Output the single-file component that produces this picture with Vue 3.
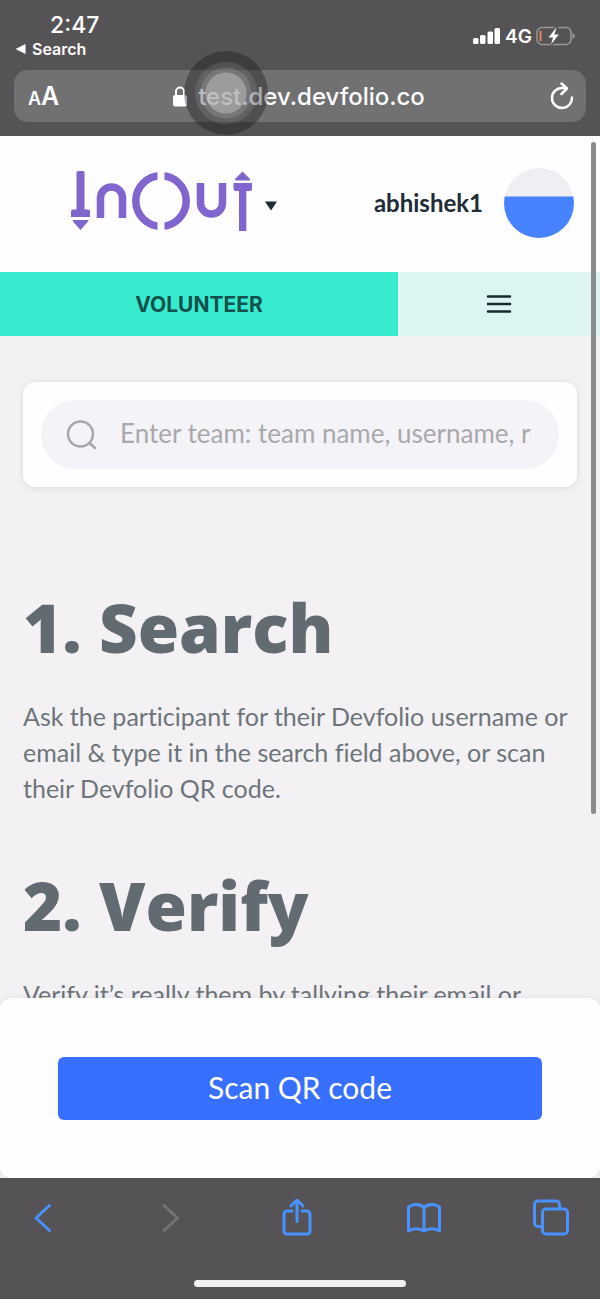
<script setup>
import { ref } from 'vue'

const query = ref('')
const steps = [
  {
    title: '1. Search',
    text: 'Ask the participant for their Devfolio username or email & type it in the search field above, or scan their Devfolio QR code.'
  },
  {
    title: '2. Verify',
    text: 'Verify it’s really them by tallying their email or'
  }
]
</script>

<template>
  <div class="phone">
    <header class="browser-top">
      <div class="status">
        <div class="status-left">
          <span class="time">2:47</span>
          <a class="back-app" href="#">
            <svg width="11" height="12" viewBox="0 0 11 12" aria-hidden="true"><path d="M10.500 1v10L0.500 6z" fill="#fff" /></svg>
            Search
          </a>
        </div>
        <div class="status-right">
          <svg width="28" height="18" viewBox="0 0 28 18" fill="#fff" aria-hidden="true">
            <rect x="0" y="11" width="5.500" height="6" rx="1.500" />
            <rect x="7" y="8" width="5.500" height="9" rx="1.500" />
            <rect x="14.500" y="4.500" width="5.500" height="12.500" rx="1.500" />
            <rect x="21.500" y="1" width="5.500" height="16" rx="1.500" />
          </svg>
          <span class="network">4G</span>
          <svg width="40" height="20" viewBox="0 0 40 20" aria-hidden="true">
            <rect x="1" y="1.500" width="34" height="17" rx="5" fill="none" stroke="#99979a" stroke-width="1.500" />
            <path d="M36.500 7c3 .8 3 5.200 0 6z" fill="#99979a" />
            <rect x="3.500" y="4.500" width="2" height="11" rx="1" fill="#e8845f" />
            <path d="M20 2l-7.500 9.500h4.500L15 18.500l7.800-10h-4.500L20.500 2z" fill="#fff" stroke="#555356" stroke-width="3" paint-order="stroke" />
          </svg>
        </div>
      </div>
      <div class="address">
        <button class="text-size" type="button" aria-label="Page settings"><span class="small-a">A</span>A</button>
        <button class="url" type="button">
          <svg width="14" height="21" viewBox="0 0 14 21" aria-hidden="true">
            <path d="M3 10V5.500a4 4 0 0 1 8 0V10" fill="none" stroke="#fff" stroke-width="2" />
            <rect x="0" y="9" width="14" height="11.500" rx="2" fill="#fff" />
          </svg>
          <span>test.dev.devfolio.co</span>
        </button>
        <button class="reload" type="button" aria-label="Reload">
          <svg width="24" height="28" viewBox="0 0 24 28" fill="none" stroke="#fff" stroke-width="2.500" stroke-linecap="round" stroke-linejoin="round" aria-hidden="true">
            <path d="M22 15.500A10 10 0 1 1 12 6h4.500M11.500 1.500l5.500 5-5.500 5.500" />
          </svg>
        </button>
        <span class="touch"></span>
      </div>
    </header>

    <div class="page">
      <main class="content">
        <div class="site-header">
          <button class="brand" type="button" aria-label="InOut, choose hackathon">
            <svg width="183" height="60" viewBox="0 0 183 60" fill="none" stroke="#8065cf" stroke-width="7.500" aria-hidden="true">
              <path d="M30.500 47V27a11 11 0 0 1 22 0v20" />
              <circle cx="91" cy="30" r="25.200" />
              <path d="M130.500 12v20a11 11 0 0 0 22 0V12" />
              <rect x="87.500" y="0" width="7" height="60" fill="#fefdff" stroke="none" />
              <g fill="#8065cf" stroke="none">
                <path d="M8 0h5q1.500 0 1.500 1.500V38.500H18q2 0 2 2V46H1v-5.500q0-2 2-2h3.500V1.500Q6.500 0 8 0z" />
                <path d="M4 49h13q2 0 1 1.500L10.500 59 3 50.500Q2 49 4 49z" />
                <path d="M172.500.5l7 7q1.500 2-.5 2h-13q-2 0-.5-2z" />
                <path d="M163.500 12h18.500v5.500q0 2.500-2.500 2.500h-3.200v40h-7.300V20h-3q-2.500 0-2.500-2.500z" />
              </g>
            </svg>
            <svg class="caret" width="12" height="10" viewBox="0 0 12 10" aria-hidden="true"><path d="M0 .5h12L6 9.500z" fill="#1f2c33" /></svg>
          </button>
          <a class="user" href="#">
            <span class="name">abhishek1</span>
            <span class="avatar"></span>
          </a>
        </div>
        <nav class="tabs">
          <a class="tab" href="#">VOLUNTEER</a>
          <button class="menu" type="button" aria-label="Menu">
            <svg width="26" height="20" viewBox="0 0 26 20" stroke="#17282d" stroke-width="2.500" stroke-linecap="round" aria-hidden="true"><path d="M2 2.500h22M2 10h22M2 17.500h22" /></svg>
          </button>
        </nav>
        <div class="body">
          <div class="card">
            <label class="search">
              <svg width="32" height="32" viewBox="0 0 32 32" fill="none" stroke="#a9a7aa" stroke-width="2.500" stroke-linecap="round" aria-hidden="true">
                <circle cx="14.500" cy="15" r="12.500" /><path d="M23.500 24l5.500 5" />
              </svg>
              <input v-model="query" type="text" aria-label="Team" placeholder="Enter team: team name, username, registered email" />
            </label>
          </div>
          <section v-for="step in steps" :key="step.title" class="step">
            <h2>{{ step.title }}</h2>
            <p>{{ step.text }}</p>
          </section>
        </div>
      </main>
      <div class="sheet">
        <button class="scan" type="button">Scan QR code</button>
      </div>
      <span class="scrollbar"></span>
    </div>

    <footer class="browser-bottom">
      <nav class="tools">
        <button type="button" aria-label="Back">
          <svg width="36" height="38" viewBox="0 0 36 38"><path d="M24.500 6.500L11 19l13.500 12.500" /></svg>
        </button>
        <button type="button" aria-label="Forward" class="off" disabled>
          <svg width="36" height="38" viewBox="0 0 36 38"><path d="M12 6.500L25.500 19 12 31.500" /></svg>
        </button>
        <button type="button" aria-label="Share">
          <svg width="36" height="38" viewBox="0 0 36 38"><path d="M13 12H8a3 3 0 0 0-3 3v17a3 3 0 0 0 3 3h20a3 3 0 0 0 3-3V15a3 3 0 0 0-3-3h-5M18 22.500V1.500M12 7l6-6 6 6" /></svg>
        </button>
        <button type="button" aria-label="Bookmarks">
          <svg width="36" height="38" viewBox="0 0 36 38"><path d="M18 8.500C14 4.500 6 4.500 2.500 8.500V32c4-3 11-3 15.500 0 4.500-3 11.500-3 15.500 0V8.500C30 4.500 22 4.500 18 8.500V32" /></svg>
        </button>
        <button type="button" aria-label="Tabs">
          <svg width="36" height="38" viewBox="0 0 36 38"><path d="M9 27.500H5a3.500 3.500 0 0 1-3.500-3.500V5.500A3.500 3.500 0 0 1 5 2h18a3.500 3.500 0 0 1 3.500 3.500V9" /><rect x="9.500" y="10" width="25" height="25" rx="3.500" /></svg>
        </button>
      </nav>
      <span class="home"></span>
    </footer>
  </div>
</template>

<style>
body {
  margin: 0;
}
</style>

<style scoped>
* {
  box-sizing: border-box;
}
button,
input {
  font: inherit;
  color: inherit;
  border: 0;
  padding: 0;
  background: none;
}
svg {
  display: block;
  flex: none;
}
a {
  color: inherit;
  text-decoration: none;
}
.phone {
  display: flex;
  flex-direction: column;
  height: 100vh;
  background: #555356;
  font-family: Lato, "Noto Sans", sans-serif;
}
.browser-top {
  flex: none;
  padding: 12px 14px 14px;
  color: #fff;
  font-family: Inter, sans-serif;
}
.status {
  display: flex;
  justify-content: space-between;
  padding-bottom: 10px;
}
.status-left {
  display: flex;
  flex-direction: column;
}
.time {
  padding-left: 36px;
  font-size: 23px;
  line-height: 26px;
  font-weight: 500;
}
.back-app {
  display: flex;
  align-items: center;
  gap: 6px;
  padding-left: 1px;
  font-size: 16px;
  line-height: 22px;
  font-weight: 600;
}
.status-right {
  display: flex;
  align-items: center;
  gap: 4px;
  padding-right: 10px;
}
.network {
  font-size: 19px;
  font-weight: 600;
}
.address {
  position: relative;
  display: flex;
  align-items: center;
  justify-content: space-between;
  height: 52px;
  padding: 0 12px 0 14px;
  border-radius: 14px;
  background: #717073;
}
.text-size {
  width: 40px;
  text-align: left;
  font-size: 25px;
  font-weight: 600;
}
.small-a {
  font-size: 18px;
}
.url {
  display: flex;
  align-items: center;
  gap: 11px;
  font-size: 24px;
  font-weight: 500;
}
.reload {
  display: flex;
  justify-content: flex-end;
  width: 44px;
}
.touch {
  position: absolute;
  left: 170px;
  top: -19px;
  width: 84px;
  height: 84px;
  border-radius: 50%;
  background: radial-gradient(circle, rgba(170, 169, 171, 0.75) 0 20px, rgba(125, 123, 126, 0.5) 21px 25px, rgba(80, 78, 82, 0.45) 26px 30px, rgba(20, 18, 22, 0.36) 32px);
}
.page {
  position: relative;
  flex: 1;
  min-height: 0;
  display: flex;
  flex-direction: column;
  background: #f3f1f4;
}
.content {
  flex: 1;
  min-height: 0;
  overflow: hidden;
}
.site-header {
  display: flex;
  justify-content: space-between;
  align-items: center;
  height: 136px;
  padding: 0 26px 2px 70px;
  background: #fefdff;
}
.brand {
  display: flex;
  align-items: center;
  gap: 12px;
  padding-bottom: 4px;
}
.caret {
  margin-top: 10px;
}
.user {
  display: flex;
  align-items: center;
  gap: 21px;
  color: #202c35;
  font-size: 24px;
  font-weight: 700;
}
.name {
  padding-bottom: 2px;
}
.avatar {
  width: 70px;
  height: 70px;
  border-radius: 50%;
  background: linear-gradient(#efeff3 28px, #4783ff 29px);
}
.tabs {
  display: grid;
  grid-template-columns: 2fr 1fr;
  height: 64px;
}
.tab,
.menu {
  display: flex;
  align-items: center;
  justify-content: center;
}
.tab {
  margin-right: 2px;
  background: #37ebcf;
  color: #14514c;
  font-size: 21px;
  font-weight: 700;
  font-family: Inter, sans-serif;
}
.tabs {
  background: #e6f8f6;
}
.menu {
  padding-right: 3px;
  background: #dcf5f2;
}
.body {
  padding: 46px 23px 0;
}
.card {
  padding: 18px;
  border-radius: 12px;
  background: #fefdff;
  box-shadow: 0 1px 6px rgba(40, 30, 50, 0.12);
}
.search {
  display: flex;
  align-items: center;
  gap: 22px;
  height: 69px;
  padding: 0 28px 0 25px;
  border-radius: 35px;
  background: #f4f3f7;
}
.search input {
  flex: 1;
  min-width: 0;
  height: 40px;
  padding-bottom: 4px;
  outline: 0;
  font-size: 26px;
}
.search input::placeholder {
  color: #aaa8ab;
  opacity: 1;
}
.step {
  padding-top: 34px;
  color: #626b71;
}
.card + .step {
  padding-top: 104px;
}
.step h2 {
  margin: 0 0 35px;
  font-family: "Open Sans", "Noto Sans", sans-serif;
  font-size: 67px;
  line-height: 72px;
  font-weight: 800;
}
.step p {
  margin: 0 0 29px;
  color: #6d757a;
  font-size: 25px;
  line-height: 36px;
  font-variant-ligatures: none;
}
.sheet {
  flex: none;
  padding: 59px 58px 58px;
  border-radius: 12px;
  background: #fefdff;
  box-shadow: 0 0 6px rgba(40, 30, 50, 0.08);
}
.scan {
  display: block;
  width: 100%;
  height: 63px;
  padding-bottom: 3px;
  border-radius: 6px;
  background: #3770ff;
  color: #fff;
  font-size: 30px;
}
.scrollbar {
  position: absolute;
  right: 4px;
  top: 6px;
  width: 5px;
  height: 64.500%;
  border-radius: 3px;
  background: #8b8a8d;
}
.browser-bottom {
  flex: none;
  display: flex;
  flex-direction: column;
  align-items: center;
  gap: 43px;
  padding: 21px 31px 12px 25px;
}
.tools {
  display: flex;
  justify-content: space-between;
  width: 100%;
}
.tools svg {
  fill: none;
  stroke: #4892ff;
  stroke-width: 3;
  stroke-linecap: round;
  stroke-linejoin: round;
}
.tools .off svg {
  stroke: #737275;
}
.home {
  width: 39%;
  height: 7px;
  margin-left: 6px;
  border-radius: 4px;
  background: #f1eff1;
}
</style>
